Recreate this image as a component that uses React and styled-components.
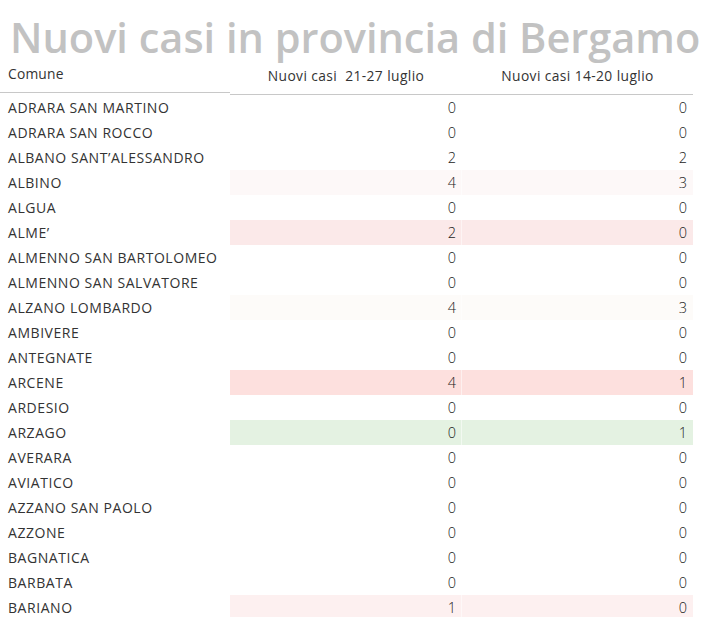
import React from "react";
import styled, { createGlobalStyle } from "styled-components";

const Global = createGlobalStyle`
  html, body { margin: 0; padding: 0; background: #ffffff; }
  body { font-family: "Open Sans", "Noto Sans", sans-serif; }
`;

const Page = styled.div`
  width: 716px;
  height: 617px;
  overflow: hidden;
  background: #fff;
`;

const Title = styled.h1`
  margin: 0;
  padding: 17px 0 0 10px;
  height: 60px;
  box-sizing: border-box;
  font-family: "Open Sans", sans-serif;
  font-weight: 600;
  font-size: 41.5px;
  line-height: 41px;
  color: #c2c2c2;
  white-space: nowrap;
`;

const Table = styled.div`
  display: grid;
  grid-template-columns: 230px 232px 231px;
  width: 693px;
`;

const HeadCell = styled.div`
  box-sizing: border-box;
  padding: 0 8px 4px;
  display: flex;
  align-items: center;
  justify-content: ${(p) => (p.$center ? "center" : "flex-start")};
  font-size: 13.8px;
  letter-spacing: ${(p) => (p.$center ? "0.4px" : "0.2px")};
  color: #333;
  border-bottom: 1px solid #c8c8c8;
  white-space: pre;
  margin-top: ${(p) => (p.$first ? "-1px" : "0")};
  height: ${(p) => (p.$first ? "34px" : "35px")};
`;

const NameCell = styled.div`
  height: 25px;
  padding-left: 8px;
  display: flex;
  align-items: center;
  font-size: 14px;
  letter-spacing: 0.55px;
  color: #333;
  white-space: nowrap;
`;

const NumCell = styled.div`
  height: 25px;
  padding-right: 6px;
  display: flex;
  align-items: center;
  justify-content: flex-end;
  font-size: 14.5px;
  font-weight: 300;
  color: #222;
  background: ${(p) => p.$bg || "transparent"};
  box-shadow: ${(p) => (p.$divider ? "inset -1px 0 0 rgba(255,255,255,0.5)" : "none")};
`;

const rows = [
  ["ADRARA SAN MARTINO", 0, 0],
  ["ADRARA SAN ROCCO", 0, 0],
  ["ALBANO SANT\u2019ALESSANDRO", 2, 2],
  ["ALBINO", 4, 3, "#fdf8f8"],
  ["ALGUA", 0, 0],
  ["ALME\u2019", 2, 0, "#fbe9e9"],
  ["ALMENNO SAN BARTOLOMEO", 0, 0],
  ["ALMENNO SAN SALVATORE", 0, 0],
  ["ALZANO LOMBARDO", 4, 3, "#fdfbf9"],
  ["AMBIVERE", 0, 0],
  ["ANTEGNATE", 0, 0],
  ["ARCENE", 4, 1, "#fde0de"],
  ["ARDESIO", 0, 0],
  ["ARZAGO", 0, 1, "#e4f2e2"],
  ["AVERARA", 0, 0],
  ["AVIATICO", 0, 0],
  ["AZZANO SAN PAOLO", 0, 0],
  ["AZZONE", 0, 0],
  ["BAGNATICA", 0, 0],
  ["BARBATA", 0, 0],
  ["BARIANO", 1, 0, "#fdf0f0"],
];

export default function App() {
  return (
    <Page>
      <Global />
      <Title>Nuovi casi in provincia di Bergamo</Title>
      <Table>
        <HeadCell $first>Comune</HeadCell>
        <HeadCell $center>{"Nuovi casi  21-27 luglio"}</HeadCell>
        <HeadCell $center>Nuovi casi 14-20 luglio</HeadCell>
        {rows.map(([name, a, b, bg]) => (
          <React.Fragment key={name}>
            <NameCell>{name}</NameCell>
            <NumCell $bg={bg} $divider>{a}</NumCell>
            <NumCell $bg={bg}>{b}</NumCell>
          </React.Fragment>
        ))}
      </Table>
    </Page>
  );
}
